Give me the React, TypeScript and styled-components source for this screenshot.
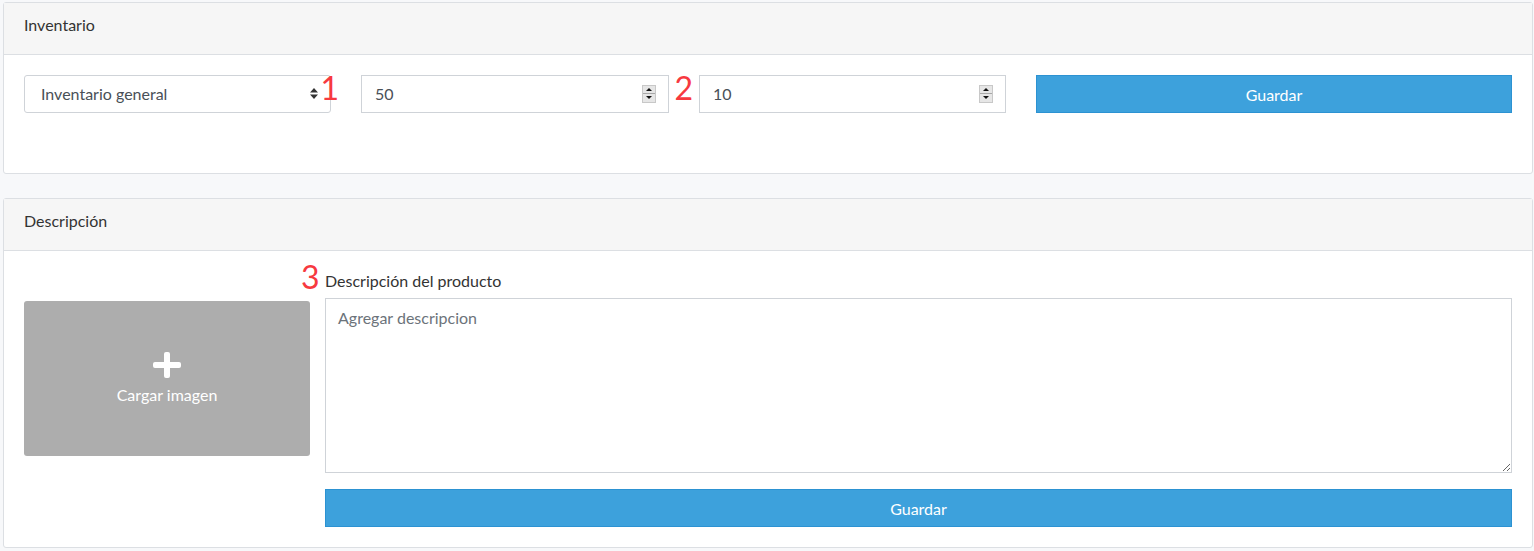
import styled, { createGlobalStyle } from "styled-components";

const GlobalStyle = createGlobalStyle`
	body {
		margin: 0;
		padding: 2px 1px 2px 3px;
		background: #f7f8fa;
		font-family: Lato, "Open Sans", sans-serif;
		color: #333;
	}
	* {
		box-sizing: border-box;
	}
`;

const Page = styled.div`
	display: flex;
	flex-direction: column;
	gap: 24px;
`;

const Card = styled.section`
	background: #fff;
	border: 1px solid #dcdfe3;
	border-radius: 3px;
`;

const CardHeader = styled.header`
	height: 52px;
	padding: 11px 20px 0;
	line-height: 22px;
	background: #f6f6f6;
	border-bottom: 1px solid #dcdfe3;
	font-size: 16px;
	color: #333;
`;

const CardBody = styled.div<{ $bottom?: number }>`
	padding: 20px 20px ${(p) => p.$bottom ?? 20}px;
`;

const FieldRow = styled.div`
	display: grid;
	grid-template-columns: 307px 308px 307px 1fr;
	column-gap: 30px;
`;

const Field = styled.div`
	position: relative;
`;

const Marker = styled.span<{ $right?: number; $left?: number; $top?: number }>`
	position: absolute;
	${(p) => (p.$left !== undefined ? `left: ${p.$left}px;` : `right: ${p.$right ?? -8}px;`)}
	top: ${(p) => p.$top ?? -3}px;
	font-family: Lato, sans-serif;
	font-size: 32px;
	line-height: 1;
	color: #f7393f;
	pointer-events: none;
`;

const SelectBox = styled.div`
	height: 38px;
	display: flex;
	align-items: center;
	justify-content: space-between;
	padding: 0 12px 1px 16px;
	border: 1px solid #cfd3d8;
	border-radius: 3px;
	font-size: 16px;
	color: #495057;
	background: #fff;
`;

const SelectArrows = styled.svg`
	width: 8px;
	height: 11px;
	fill: #333;
`;

const NumberBox = styled.div`
	height: 38px;
	display: flex;
	align-items: center;
	justify-content: space-between;
	padding: 0 12px 1px 13px;
	border: 1px solid #cfd3d8;
	font-size: 16px;
	color: #495057;
	background: #fff;
`;

const Spinner = styled.div`
	width: 14px;
	height: 18px;
	display: flex;
	flex-direction: column;
	background: #e6e6e6;
	border: 1px solid #c8c8c8;
`;

const SpinHalf = styled.div<{ $down?: boolean }>`
	flex: 1;
	display: flex;
	align-items: center;
	justify-content: center;
	border-top: ${(p) => (p.$down ? "1px solid #a8a8a8" : "none")};

	&::before {
		content: "";
		border-left: 3px solid transparent;
		border-right: 3px solid transparent;
		${(p) => (p.$down ? "border-top: 3px solid #111;" : "border-bottom: 3px solid #111;")}
	}
`;

const SaveButton = styled.button`
	width: 100%;
	height: 38px;
	border: 1px solid #2c92d2;
	background: #3da1dc;
	color: #fff;
	font-family: Lato, sans-serif;
	font-size: 16px;
	cursor: pointer;
`;

const DescLayout = styled.div`
	display: grid;
	grid-template-columns: 286px 1fr;
	column-gap: 15px;
`;

const ImageDrop = styled.div`
	margin-top: 30px;
	height: 155px;
	border-radius: 3px;
	background: #adadad;
	color: #fff;
	display: flex;
	flex-direction: column;
	align-items: center;
	justify-content: center;
	gap: 7px;
	font-size: 16px;
	padding-bottom: 2px;
`;

const PlusIcon = styled.svg`
	width: 28px;
	height: 26px;
`;

const DescColumn = styled.div`
	display: flex;
	flex-direction: column;
`;

const Label = styled.label`
	position: relative;
	font-size: 16px;
	line-height: 20px;
	margin-bottom: 7px;
	color: #333;
`;

const TextArea = styled.textarea`
	height: 175px;
	padding: 9px 12px;
	border: 1px solid #cfd3d8;
	font-family: Lato, sans-serif;
	font-size: 16px;
	color: #495057;
	margin-bottom: 16px;

	&::placeholder {
		color: #6c737a;
	}
`;

const App = () => {
	return (
		<>
			<GlobalStyle />
			<Page>
				<Card>
					<CardHeader>Inventario</CardHeader>
					<CardBody $bottom={60}>
						<FieldRow>
							<Field>
								<SelectBox>
									<span>Inventario general</span>
									<SelectArrows viewBox="0 0 8 11">
										<path d="M4 0 L8 4.5 H0 Z M0 6.5 H8 L4 11 Z" />
									</SelectArrows>
								</SelectBox>
								<Marker $right={-8} $top={-3}>
									1
								</Marker>
							</Field>
							<Field>
								<NumberBox>
									<span>50</span>
									<Spinner>
										<SpinHalf />
										<SpinHalf $down />
									</Spinner>
								</NumberBox>
								<Marker $right={-24} $top={-3}>
									2
								</Marker>
							</Field>
							<Field>
								<NumberBox>
									<span>10</span>
									<Spinner>
										<SpinHalf />
										<SpinHalf $down />
									</Spinner>
								</NumberBox>
							</Field>
							<SaveButton>Guardar</SaveButton>
						</FieldRow>
					</CardBody>
				</Card>

				<Card>
					<CardHeader>Descripción</CardHeader>
					<CardBody>
						<DescLayout>
							<ImageDrop>
								<PlusIcon viewBox="0 0 28 26">
									<rect x="11" y="0" width="6" height="26" rx="2" fill="#fff" />
									<rect x="0" y="10" width="28" height="6" rx="2" fill="#fff" />
								</PlusIcon>
								<span>Cargar imagen</span>
							</ImageDrop>
							<DescColumn>
								<Label>
									<Marker $left={-24} $top={-10}>
										3
									</Marker>
									Descripción del producto
								</Label>
								<TextArea placeholder="Agregar descripcion" />
								<SaveButton>Guardar</SaveButton>
							</DescColumn>
						</DescLayout>
					</CardBody>
				</Card>
			</Page>
		</>
	);
};

export default App;
